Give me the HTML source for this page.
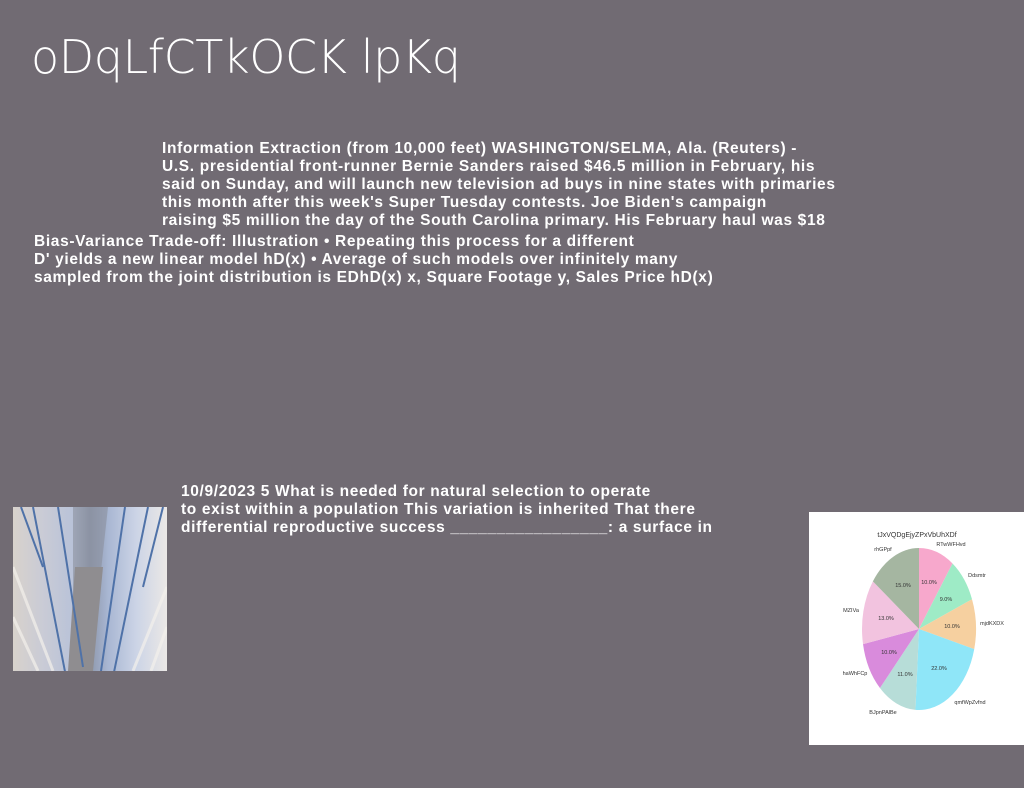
<!DOCTYPE html>
<html><head><meta charset="utf-8"><style>
html,body{margin:0;padding:0}
body{width:1024px;height:788px;background:#716b73;position:relative;overflow:hidden;font-family:"Liberation Sans",sans-serif}
.t{position:absolute;left:31px;top:30px;color:#fff;font-family:"DejaVu Sans","Liberation Sans",sans-serif;font-weight:200;font-size:46px;letter-spacing:-0.4px;white-space:nowrap}
.p{position:absolute;color:#fff;font-weight:bold;font-size:15.5px;line-height:18px;white-space:nowrap;letter-spacing:0.65px}
.img{position:absolute;left:13px;top:507px;width:154px;height:164px;overflow:hidden;background:linear-gradient(90deg,#d8d2cc 0%,#c9cbd6 20%,#b8c2d8 40%,#8e98ad 50%,#a9b7d3 62%,#ccd4e6 80%,#ebe8e6 100%)}
.chart{position:absolute;left:809px;top:512px;width:215px;height:233px;background:#fff}
</style></head><body>
<div class="t">oDqLfCTkOCK lpKq</div>
<div class="p" style="left:162px;top:140px">Information Extraction (from 10,000 feet) WASHINGTON/SELMA, Ala. (Reuters) -<br>U.S. presidential front-runner Bernie Sanders raised $46.5 million in February, his<br>said on Sunday, and will launch new television ad buys in nine states with primaries<br>this month after this week's Super Tuesday contests. Joe Biden's campaign<br>raising $5 million the day of the South Carolina primary. His February haul was $18</div>
<div class="p" style="left:34px;top:233px">Bias-Variance Trade-off: Illustration • Repeating this process for a different<br>D' yields a new linear model hD(x) • Average of such models over infinitely many<br>sampled from the joint distribution is EDhD(x) x, Square Footage y, Sales Price hD(x)</div>
<div class="p" style="left:181px;top:483px">10/9/2023 5 What is needed for natural selection to operate<br>to exist within a population This variation is inherited That there<br>differential reproductive success _________________: a surface in</div>
<div class="img"><svg width="154" height="164">
<polygon points="60,0 95,0 77,164 60,164" fill="#8a909c" opacity="0.6"/>
<polygon points="62,60 90,60 80,164 55,164" fill="#8f8d90"/>
<g stroke="#4f72a8" stroke-width="2" fill="none">
<line x1="20" y1="0" x2="55" y2="180"/><line x1="45" y1="0" x2="70" y2="160"/><line x1="8" y1="0" x2="30" y2="60"/>
<line x1="135" y1="0" x2="100" y2="170"/><line x1="112" y1="0" x2="88" y2="164"/><line x1="150" y1="0" x2="130" y2="80"/>
</g>
<g stroke="#f4f1ec" stroke-width="3" opacity="0.7"><line x1="0" y1="60" x2="40" y2="164"/><line x1="0" y1="110" x2="25" y2="164"/><line x1="154" y1="80" x2="120" y2="164"/><line x1="154" y1="120" x2="138" y2="164"/></g>
</svg></div>
<div class="chart"><svg width="215" height="233" font-family="Liberation Sans,sans-serif" font-size="5.5" fill="#333">
<g transform="translate(110,117) scale(57,81)">
<path d="M0,0 L0,-1 A1,1 0 0 1 0.588,-0.809Z" fill="#f7a8cc"/>
<path d="M0,0 L0.588,-0.809 A1,1 0 0 1 0.930,-0.368Z" fill="#9eebc6"/>
<path d="M0,0 L0.930,-0.368 A1,1 0 0 1 0.969,0.249Z" fill="#f6d0a0"/>
<path d="M0,0 L0.969,0.249 A1,1 0 0 1 -0.0628,0.998Z" fill="#8fe6f8"/>
<path d="M0,0 L-0.0628,0.998 A1,1 0 0 1 -0.685,0.729Z" fill="#b7ddd8"/>
<path d="M0,0 L-0.685,0.729 A1,1 0 0 1 -0.982,0.187Z" fill="#d98bdc"/>
<path d="M0,0 L-0.982,0.187 A1,1 0 0 1 -0.809,-0.588Z" fill="#f2c3df"/>
<path d="M0,0 L-0.809,-0.588 A1,1 0 0 1 0,-1Z" fill="#a5b6a1"/>
</g>
<text x="108" y="25" font-size="7" text-anchor="middle">tJxVQDgEjyZPxVbUhXDf</text>
<text x="142" y="34" text-anchor="middle">RTwWFHvd</text>
<text x="168" y="65" text-anchor="middle">Ddsmtr</text>
<text x="183" y="113" text-anchor="middle">mjdKXDX</text>
<text x="161" y="192" text-anchor="middle">qmfWpZvfnd</text>
<text x="74" y="202" text-anchor="middle">BJpnPAlBe</text>
<text x="46" y="163" text-anchor="middle">haWhFCp</text>
<text x="42" y="100" text-anchor="middle">MZIVa</text>
<text x="74" y="39" text-anchor="middle">rhGPpf</text>
<text x="120" y="72" text-anchor="middle">10.0%</text>
<text x="137" y="89" text-anchor="middle">9.0%</text>
<text x="143" y="116" text-anchor="middle">10.0%</text>
<text x="130" y="158" text-anchor="middle">22.0%</text>
<text x="96" y="164" text-anchor="middle">11.0%</text>
<text x="80" y="142" text-anchor="middle">10.0%</text>
<text x="77" y="108" text-anchor="middle">13.0%</text>
<text x="94" y="75" text-anchor="middle">15.0%</text>
</svg></div>
</body></html>
